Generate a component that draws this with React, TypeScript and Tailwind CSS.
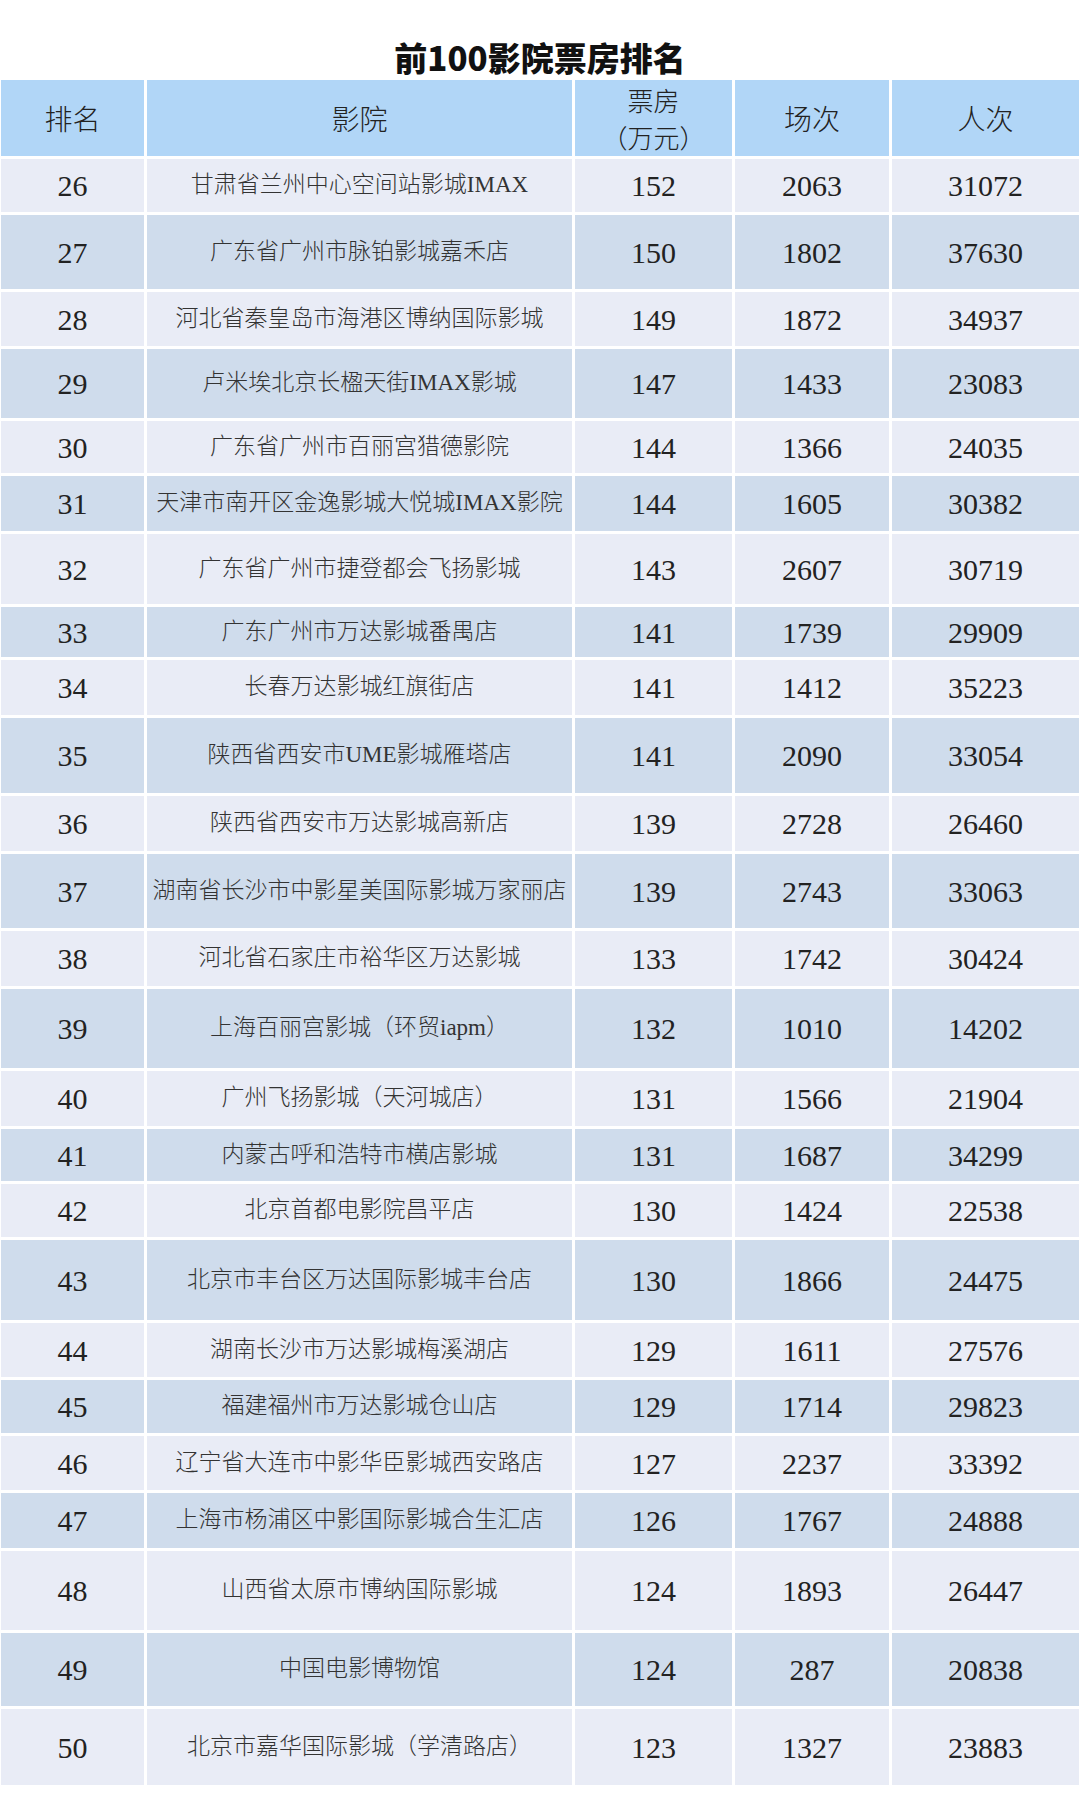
import React from 'react';

type Row = {
  rank: number;
  name: string;
  box: string;
  shows: string;
  people: string;
  h: string;
};

const rows: Row[] = [
  { rank: 26, name: '甘肃省兰州中心空间站影城IMAX', box: '152', shows: '2063', people: '31072', h: 'h-[53px]' },
  { rank: 27, name: '广东省广州市脉铂影城嘉禾店', box: '150', shows: '1802', people: '37630', h: 'h-[74px]' },
  { rank: 28, name: '河北省秦皇岛市海港区博纳国际影城', box: '149', shows: '1872', people: '34937', h: 'h-[54px]' },
  { rank: 29, name: '卢米埃北京长楹天街IMAX影城', box: '147', shows: '1433', people: '23083', h: 'h-[69px]' },
  { rank: 30, name: '广东省广州市百丽宫猎德影院', box: '144', shows: '1366', people: '24035', h: 'h-[52px]' },
  { rank: 31, name: '天津市南开区金逸影城大悦城IMAX影院', box: '144', shows: '1605', people: '30382', h: 'h-[55px]' },
  { rank: 32, name: '广东省广州市捷登都会飞扬影城', box: '143', shows: '2607', people: '30719', h: 'h-[70px]' },
  { rank: 33, name: '广东广州市万达影城番禺店', box: '141', shows: '1739', people: '29909', h: 'h-[50px]' },
  { rank: 34, name: '长春万达影城红旗街店', box: '141', shows: '1412', people: '35223', h: 'h-[55px]' },
  { rank: 35, name: '陕西省西安市UME影城雁塔店', box: '141', shows: '2090', people: '33054', h: 'h-[75px]' },
  { rank: 36, name: '陕西省西安市万达影城高新店', box: '139', shows: '2728', people: '26460', h: 'h-[55px]' },
  { rank: 37, name: '湖南省长沙市中影星美国际影城万家丽店', box: '139', shows: '2743', people: '33063', h: 'h-[74px]' },
  { rank: 38, name: '河北省石家庄市裕华区万达影城', box: '133', shows: '1742', people: '30424', h: 'h-[55px]' },
  { rank: 39, name: '上海百丽宫影城（环贸iapm）', box: '132', shows: '1010', people: '14202', h: 'h-[79px]' },
  { rank: 40, name: '广州飞扬影城（天河城店）', box: '131', shows: '1566', people: '21904', h: 'h-[55px]' },
  { rank: 41, name: '内蒙古呼和浩特市横店影城', box: '131', shows: '1687', people: '34299', h: 'h-[52px]' },
  { rank: 42, name: '北京首都电影院昌平店', box: '130', shows: '1424', people: '22538', h: 'h-[53px]' },
  { rank: 43, name: '北京市丰台区万达国际影城丰台店', box: '130', shows: '1866', people: '24475', h: 'h-[80px]' },
  { rank: 44, name: '湖南长沙市万达影城梅溪湖店', box: '129', shows: '1611', people: '27576', h: 'h-[54px]' },
  { rank: 45, name: '福建福州市万达影城仓山店', box: '129', shows: '1714', people: '29823', h: 'h-[53px]' },
  { rank: 46, name: '辽宁省大连市中影华臣影城西安路店', box: '127', shows: '2237', people: '33392', h: 'h-[54px]' },
  { rank: 47, name: '上海市杨浦区中影国际影城合生汇店', box: '126', shows: '1767', people: '24888', h: 'h-[55px]' },
  { rank: 48, name: '山西省太原市博纳国际影城', box: '124', shows: '1893', people: '26447', h: 'h-[79px]' },
  { rank: 49, name: '中国电影博物馆', box: '124', shows: '287', people: '20838', h: 'h-[73px]' },
  { rank: 50, name: '北京市嘉华国际影城（学清路店）', box: '123', shows: '1327', people: '23883', h: 'h-[76px]' },
];

const cols = 'grid grid-cols-[143px_425px_157px_154px_187px] gap-x-[3px]';
const num = "font-['Liberation_Serif',serif] text-[30px] text-[#222]";
const head = "font-['Noto_Sans_CJK_SC',sans-serif] font-light text-[28px] text-[#222]";

export default function App() {
  return (
    <div className="w-[1080px] h-[1800px] bg-white">
      <div className="h-[80px] pt-[34px] flex items-center justify-center">
        <h1 className="font-['Noto_Sans_CJK_SC',sans-serif] font-black text-[33px] leading-none text-[#111]">
          前100影院票房排名
        </h1>
      </div>

      <div className="ml-[1px] w-[1078px] flex flex-col gap-y-[3px]">
        <div className={`${cols} h-[76px]`}>
          <div className={`bg-[#b1d6f7] flex items-center justify-center ${head}`}>排名</div>
          <div className={`bg-[#b1d6f7] flex items-center justify-center ${head}`}>影院</div>
          <div className="bg-[#b1d6f7] flex flex-col items-center justify-center font-['Noto_Sans_CJK_SC',sans-serif] font-light text-[26px] leading-[37px] text-[#222]">
            <span>票房</span>
            <span>（万元）</span>
          </div>
          <div className={`bg-[#b1d6f7] flex items-center justify-center ${head}`}>场次</div>
          <div className={`bg-[#b1d6f7] flex items-center justify-center ${head}`}>人次</div>
        </div>

        {rows.map((r, i) => {
          const bg = i % 2 === 0 ? 'bg-[#e9ecf6]' : 'bg-[#cfdcec]';
          return (
            <div key={r.rank} className={`${cols} ${r.h}`}>
              <div className={`${bg} flex items-center justify-center ${num}`}>{r.rank}</div>
              <div
                className={`${bg} flex items-center justify-center whitespace-nowrap font-['Liberation_Serif','Noto_Sans_CJK_SC',serif] font-light text-[23px] text-[#333]`}
              >
                {r.name}
              </div>
              <div className={`${bg} flex items-center justify-center ${num}`}>{r.box}</div>
              <div className={`${bg} flex items-center justify-center ${num}`}>{r.shows}</div>
              <div className={`${bg} flex items-center justify-center ${num}`}>{r.people}</div>
            </div>
          );
        })}
      </div>
    </div>
  );
}
